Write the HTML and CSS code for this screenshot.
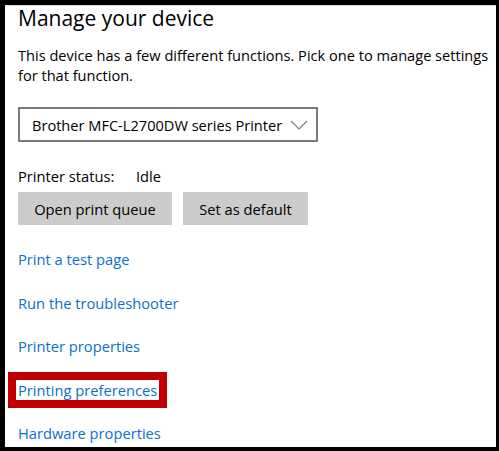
FILE: index.html
```html
<!DOCTYPE html>
<html lang="en">
<head>
    <meta charset="UTF-8">
    <meta name="viewport" content="width=device-width, initial-scale=1.0">
    <title>Manage your device</title>
    <link rel="stylesheet" href="styles.css">
</head>
<body>

<div class="frame">
    <h1 class="title">Manage your device</h1>

    <p class="intro">This device has a few different functions. Pick one to manage settings<br>for that function.</p>

    <div class="select">
        <span>Brother MFC-L2700DW series Printer</span>
        <svg class="chevron" width="18" height="10" viewBox="0 0 18 10">
            <path d="M1 1 L9 9 L17 1" fill="none" stroke="#7a7a7a" stroke-width="1.1"/>
        </svg>
    </div>

    <div class="status">
        <span class="status-label">Printer status:</span>
        <span>Idle</span>
    </div>

    <div class="actions">
        <button class="open-queue">Open print queue</button>
        <button class="set-default">Set as default</button>
    </div>

    <ul class="links">
        <li><a href="#">Print a test page</a></li>
        <li><a href="#">Run the troubleshooter</a></li>
        <li><a href="#">Printer properties</a></li>
        <li><a href="#" class="highlight">Printing preferences</a></li>
        <li><a href="#">Hardware properties</a></li>
    </ul>
</div>

</body>
</html>
```

FILE: styles.css
```css
html, body {
    margin: 0;
    padding: 0;
    height: 100%;
}
body {
    background-color: black;
    padding: 5px 3px 4px 5px;
    box-sizing: border-box;
    font-family: "Open Sans", "Noto Sans", sans-serif;
    color: black;
}
.frame {
    background-color: white;
    height: 100%;
    padding: 0 0 0 13px;
    box-sizing: border-box;
    overflow: hidden;
    border-top: 1px solid #d8d8d8;
}
.title {
    font-size: 21px;
    font-weight: 400;
    line-height: 28px;
    margin: -2px 0 0 0;
}
.intro {
    font-size: 14.6px;
    line-height: 20px;
    margin: 13px 0 0 0;
    white-space: nowrap;
}
.select {
    display: flex;
    align-items: center;
    justify-content: space-between;
    width: 276px;
    height: 31px;
    border: 2px solid #7a7a7a;
    margin-top: 22px;
    padding: 0 8px 0 12px;
    box-sizing: content-box;
    font-size: 14.6px;
}
.status {
    display: flex;
    font-size: 14.7px;
    line-height: 20px;
    margin-top: 24px;
}
.status-label {
    width: 118px;
}
.actions {
    display: flex;
    gap: 11px;
    margin-top: 6px;
}
.actions button {
    background-color: #cccccc;
    border: none;
    height: 33px;
    font-family: inherit;
    font-size: 14.7px;
    color: black;
    padding: 0;
}
.open-queue {
    width: 154px;
}
.set-default {
    width: 125px;
}
.links {
    list-style: none;
    margin: 24px 0 0 0;
    padding: 0;
}
.links li {
    height: 43.5px;
    font-size: 14.7px;
    line-height: 20px;
}
.links a {
    color: #0a6fd0;
    text-decoration: none;
}
.links a.highlight {
    outline: 8px solid #c00000;
    padding: 0 2px;
    margin: 0 -2px;
}
```
